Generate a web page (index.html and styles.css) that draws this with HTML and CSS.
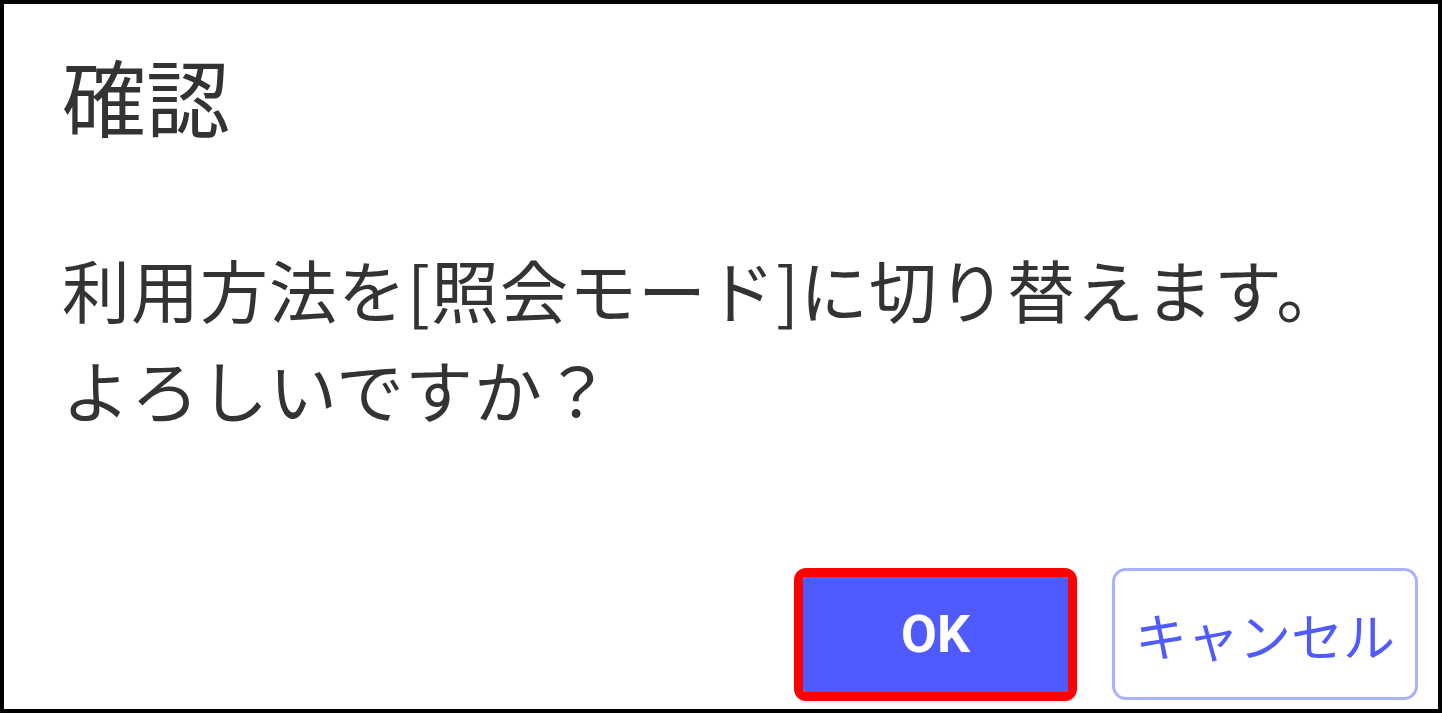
FILE: index.html
```html
<!DOCTYPE html>
<html lang="ja">
<head>
    <meta charset="UTF-8">
    <meta name="viewport" content="width=device-width, initial-scale=1.0">
    <title>確認</title>
    <link rel="stylesheet" href="styles.css">
</head>
<body>

<div class="dialog">
    <h1 class="dialog-title">確認</h1>
    <div class="dialog-body">
        <p>利用方法を[照会モード]に切り替えます。</p>
        <p>よろしいですか？</p>
    </div>
    <div class="dialog-actions">
        <button class="ok-btn">OK</button>
        <button class="cancel-btn">キャンセル</button>
    </div>
</div>

</body>
</html>
```

FILE: styles.css
```css
body {
    margin: 0;
    font-family: "Noto Sans CJK JP", sans-serif;
    background: white;
}
.dialog {
    box-sizing: border-box;
    height: 713px;
    border: 4px solid #000;
    display: flex;
    flex-direction: column;
    padding: 41px 20px 9px 58px;
    color: #333;
}
.dialog-title {
    margin: 0;
    font-size: 84px;
    font-weight: normal;
    line-height: 100px;
}
.dialog-body {
    margin-top: 94px;
}
.dialog-body p {
    margin: 0;
    font-size: 68px;
    line-height: 100px;
    letter-spacing: 1px;
    white-space: nowrap;
}
.dialog-actions {
    margin-top: auto;
    display: flex;
    justify-content: flex-end;
    align-items: center;
    gap: 44px;
}
button {
    font-family: Roboto, "Noto Sans CJK JP", sans-serif;
    cursor: pointer;
}
.ok-btn {
    width: 265px;
    height: 115px;
    border: none;
    border-radius: 3px;
    background-color: #4f5bff;
    color: white;
    font-size: 52px;
    font-weight: bold;
    outline: 9px solid #ff0000;
    box-shadow: 0 4px 12px rgba(0,0,0,0.18);
}
.cancel-btn {
    box-sizing: border-box;
    width: 306px;
    height: 132px;
    border: 3px solid #aab2ff;
    border-radius: 14px;
    background: white;
    color: #4f5bff;
    font-size: 52px;
    font-family: "Noto Sans CJK JP", sans-serif;
    padding: 0;
}
```
